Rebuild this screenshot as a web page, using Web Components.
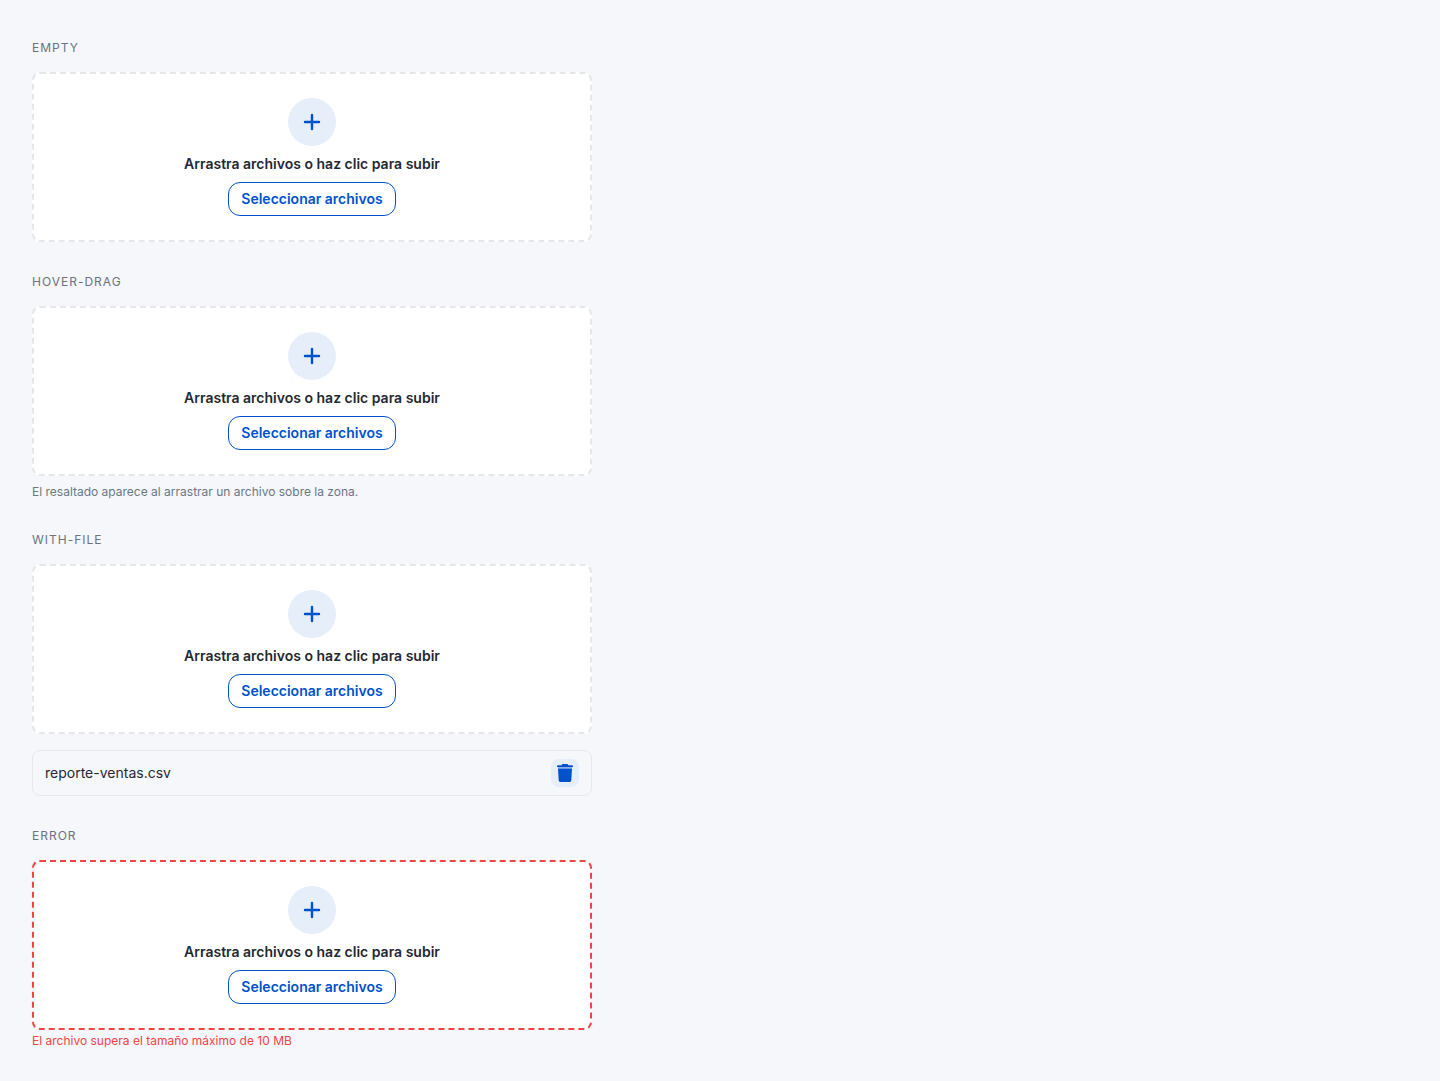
<!DOCTYPE html>
<html lang="es">
<head>
<meta charset="utf-8">
<meta name="viewport" content="width=device-width, initial-scale=1">
<title>Carga de archivos</title>
<style>
  body {
    margin: 0;
    background: #f5f7fb;
    color: #1f2933;
    font-family: Inter, "Liberation Sans", sans-serif;
    font-size: 14px;
    line-height: 20px;
    --primary: #0052cc;
    --primary-soft: #e6eefa;
    --border: #e5e7eb;
    --muted: #6b7280;
    --hint: #6b7785;
    --danger: #ef4444;
    --surface: #ffffff;
  }
</style>
</head>
<body>
<upload-gallery>
  <demo-section label="Empty"><file-dropzone></file-dropzone></demo-section>
  <demo-section label="Hover-drag">
    <file-dropzone></file-dropzone>
    <span slot="hint">El resaltado aparece al arrastrar un archivo sobre la zona.</span>
  </demo-section>
  <demo-section label="With-file">
    <file-dropzone><file-row>reporte-ventas.csv</file-row></file-dropzone>
  </demo-section>
  <demo-section label="Error">
    <file-dropzone error="El archivo supera el tamaño máximo de 10 MB"></file-dropzone>
  </demo-section>
</upload-gallery>

<script>
class UploadGallery extends HTMLElement {
  constructor() {
    super();
    this.attachShadow({ mode: 'open' }).innerHTML = `
      <style>
        :host { display: block; }
        main { display: flex; flex-direction: column; gap: 32px; padding: 40px 32px 32px; }
      </style>
      <main><slot></slot></main>`;
  }
}

class DemoSection extends HTMLElement {
  constructor() {
    super();
    this.attachShadow({ mode: 'open' }).innerHTML = `
      <style>
        :host { display: block; max-width: 560px; }
        h2 {
          margin: 0 0 16px; color: var(--muted);
          font-size: 12px; font-weight: 400; line-height: 16px;
          letter-spacing: 1px; text-transform: uppercase;
        }
        ::slotted([slot="hint"]) {
          display: block; margin-top: 8px; color: var(--hint);
          font-size: 12px; line-height: 16px;
        }
      </style>
      <section><h2></h2><slot></slot><slot name="hint"></slot></section>`;
  }
  connectedCallback() {
    this.shadowRoot.querySelector('h2').textContent = this.getAttribute('label');
  }
}

class FileDropzone extends HTMLElement {
  constructor() {
    super();
    this.attachShadow({ mode: 'open' }).innerHTML = `
      <style>
        :host { display: block; }
        .zone {
          display: flex; flex-direction: column; align-items: center; gap: 8px;
          padding: 24px; border: 2px dashed var(--border); border-radius: 8px;
          background: var(--surface);
        }
        :host([error]) .zone { border-color: var(--danger); }
        .zone.dragging { border-color: var(--primary); background: var(--primary-soft); }
        .badge {
          display: grid; place-items: center; width: 48px; height: 48px;
          border-radius: 50%; background: var(--primary-soft); color: var(--primary);
        }
        .title { margin: 0; font-weight: 600; text-align: center; }
        button {
          height: 34px; padding: 0 12px; border: 1px solid var(--primary);
          border-radius: 12px; background: var(--surface); color: var(--primary);
          font: inherit; font-weight: 600; cursor: pointer;
        }
        .error { margin: 4px 0 0; color: var(--danger); font-size: 12px; line-height: 14px; }
      </style>
      <div class="zone">
        <span class="badge">
          <svg width="24" height="24" viewBox="0 0 24 24" fill="none" stroke="currentColor" stroke-width="2.4" stroke-linecap="round" aria-hidden="true"><path d="M12 5v14M5 12h14"/></svg>
        </span>
        <p class="title">Arrastra archivos o haz clic para subir</p>
        <button type="button">Seleccionar archivos</button>
        <input type="file" aria-label="Archivos" hidden multiple>
      </div>
      <slot></slot>
      <p class="error" role="alert" hidden></p>`;
    const zone = this.shadowRoot.querySelector('.zone');
    const input = this.shadowRoot.querySelector('input');
    this.shadowRoot.querySelector('button').addEventListener('click', () => input.click());
    zone.addEventListener('dragover', e => { e.preventDefault(); zone.classList.add('dragging'); });
    zone.addEventListener('dragleave', () => zone.classList.remove('dragging'));
    zone.addEventListener('drop', e => { e.preventDefault(); zone.classList.remove('dragging'); this.addFiles(e.dataTransfer.files); });
    input.addEventListener('change', () => this.addFiles(input.files));
  }
  connectedCallback() {
    const error = this.shadowRoot.querySelector('.error');
    error.textContent = this.getAttribute('error') || '';
    error.hidden = !this.hasAttribute('error');
  }
  addFiles(files) {
    for (const file of files) {
      const row = document.createElement('file-row');
      row.textContent = file.name;
      this.append(row);
    }
  }
}

class FileRow extends HTMLElement {
  constructor() {
    super();
    this.attachShadow({ mode: 'open' }).innerHTML = `
      <style>
        :host {
          display: flex; align-items: center; justify-content: space-between; gap: 12px;
          margin-top: 16px; padding: 8px 12px; border: 1px solid var(--border); border-radius: 8px;
        }
        button {
          display: grid; place-items: center; width: 28px; height: 28px; padding: 0;
          border: 0; border-radius: 8px; background: var(--primary-soft);
          color: var(--primary); cursor: pointer;
        }
      </style>
      <slot></slot>
      <button type="button" aria-label="Eliminar archivo">
        <svg width="20" height="20" viewBox="0 0 20 20" fill="currentColor" aria-hidden="true">
          <path d="M7.4 1h5.2l.8 1.2H17a1 1 0 0 1 1 1V4H2v-.8a1 1 0 0 1 1-1h3.6z"/>
          <path d="M2.8 4h14.4l-.1 2H2.9z" opacity=".4"/>
          <path d="M3 5.8h14l-.7 11.8a1.5 1.5 0 0 1-1.5 1.4H5.2a1.5 1.5 0 0 1-1.5-1.4z"/>
        </svg>
      </button>`;
    this.shadowRoot.querySelector('button').addEventListener('click', () => this.remove());
  }
}

customElements.define('upload-gallery', UploadGallery);
customElements.define('demo-section', DemoSection);
customElements.define('file-dropzone', FileDropzone);
customElements.define('file-row', FileRow);
</script>
</body>
</html>
